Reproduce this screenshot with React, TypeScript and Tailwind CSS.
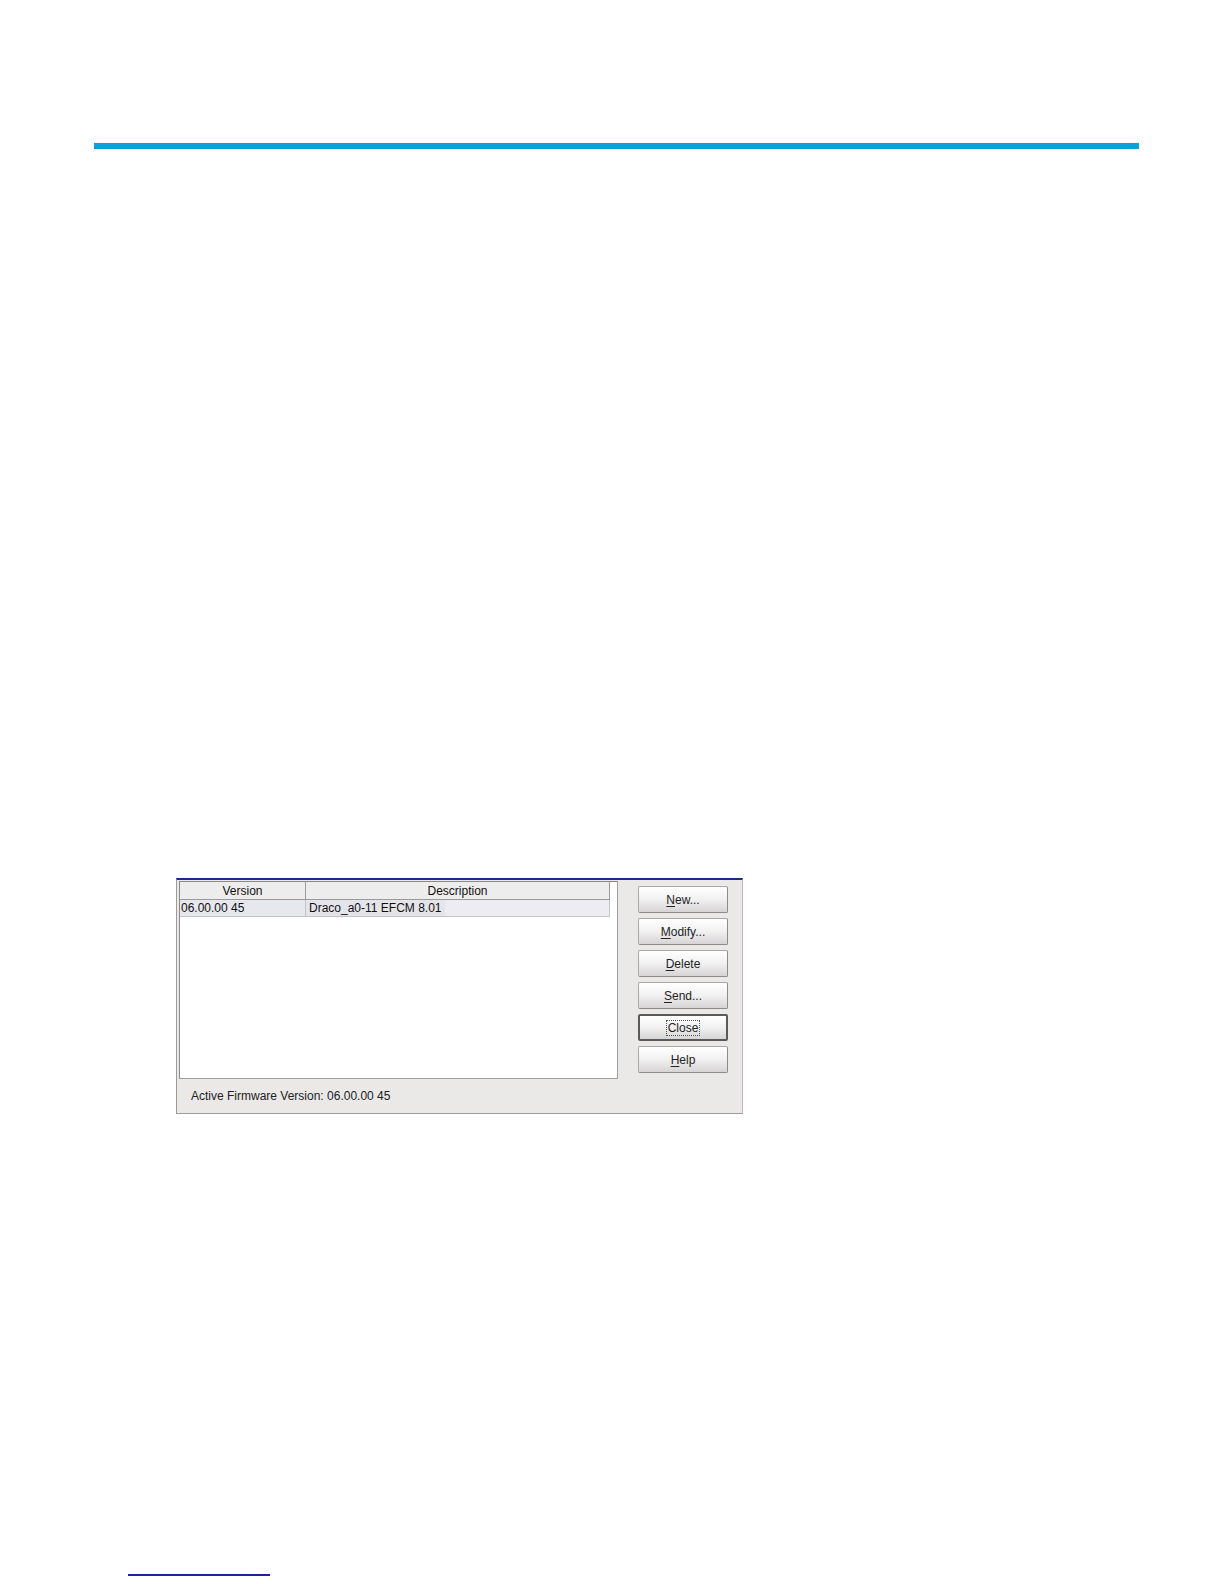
import React from 'react';

const font = { fontFamily: '"Liberation Sans", Arial, sans-serif' };

const Btn: React.FC<{ label: string; u?: number; focus?: boolean }> = ({ label, u, focus }) => {
    const text =
        u === undefined ? (
            label
        ) : (
            <>
                {label.slice(0, u)}
                <span className="underline underline-offset-2">{label[u]}</span>
                {label.slice(u + 1)}
            </>
        );
    return (
        <div
            className={
                'w-[90px] h-[27px] flex items-center justify-center rounded-[2px] bg-gradient-to-b from-[#ffffff] via-[#f2f1f1] to-[#d6d4d4] text-[12px] text-[#222] ' +
                (focus ? 'border-2 border-[#5a5a5a]' : 'border border-[#aaa8a8] border-b-[#8c8a8a] border-r-[#8c8a8a]')
            }
        >
            {focus ? <span className="border border-dotted border-[#555] px-[1px] leading-[14px]">{text}</span> : <span>{text}</span>}
        </div>
    );
};

const App: React.FC = () => {
    return (
        <div className="w-[1224px] h-[1584px] bg-white" style={font}>
            <div className="pt-[143px] pl-[94px]">
                <div className="w-[1045px] h-[6px] bg-[#07a3da]" />

                <div className="mt-[729px] ml-[82px] w-[567px] h-[236px] bg-[#ebe8e8] border-t-2 border-t-[#1b2a86] border-l border-l-[#9c9a9a] border-r border-r-[#b8b6b6] border-b border-b-[#9c9a9a] flex flex-col">
                    <div className="flex">
                        <div className="ml-[2px] mt-[1px] w-[439px] h-[198px] bg-white border border-[#9f9f9f] border-t-[#8a8a8a] border-l-[#8a8a8a]">
                            <div className="flex h-[18px] text-[12px] text-[#111]">
                                <div className="w-[126px] flex items-center justify-center bg-[#eeeded] border-r border-b border-[#9a9a9a]">Version</div>
                                <div className="w-[304px] flex items-center justify-center bg-[#eeeded] border-r border-b border-[#9a9a9a]">Description</div>
                            </div>
                            <div className="flex h-[17px] text-[12px] text-[#111]">
                                <div className="w-[126px] flex items-center pl-[1px] bg-[#e7e7ee] border-r border-b border-[#c4c4cc]">06.00.00 45</div>
                                <div className="w-[304px] flex bg-[#ececf2] border-r border-b border-[#c4c4cc]">
                                    <span className="flex items-center pl-[3px] pr-[3px] bg-[#e4e4ea]">Draco_a0-11 EFCM 8.01</span>
                                </div>
                            </div>
                        </div>
                        <div className="ml-[20px] mt-[6px] flex flex-col gap-[5px]">
                            <Btn label="New..." u={0} />
                            <Btn label="Modify..." u={0} />
                            <Btn label="Delete" u={0} />
                            <Btn label="Send..." u={0} />
                            <Btn label="Close" focus />
                            <Btn label="Help" u={0} />
                        </div>
                    </div>
                    <div className="pl-[14px] mt-[8px] text-[12px] text-[#222]">Active Firmware Version: 06.00.00 45</div>
                </div>

                <div className="mt-[460px] ml-[34px] w-[142px] h-[2px] bg-[#1c2498]" />
            </div>
        </div>
    );
};

export default App;
